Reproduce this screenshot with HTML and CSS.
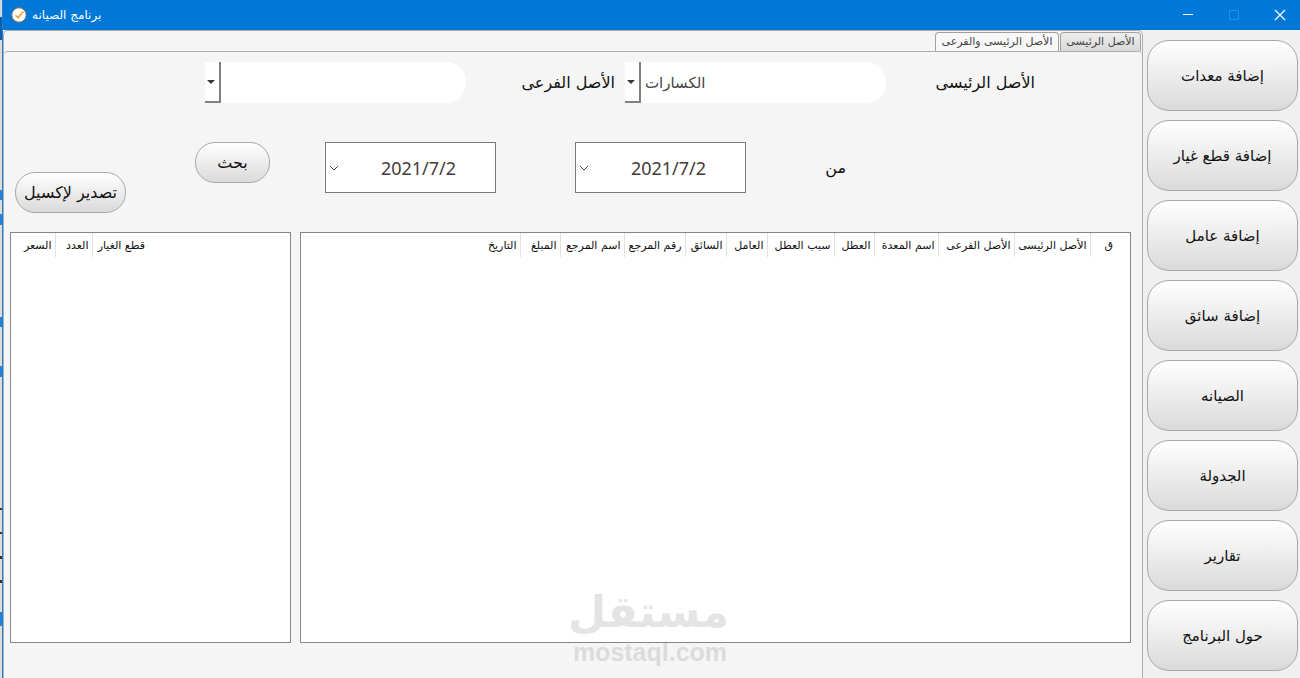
FILE: index.html
```html
<!DOCTYPE html>
<html lang="ar" dir="rtl">
<head>
	<meta charset="UTF-8">
	<meta name="viewport" content="width=device-width, initial-scale=1">
	<title>برنامج الصيانه</title>
	<link rel="stylesheet" href="styles.css">
</head>
<body>
	<div class="window">
		<header class="titlebar">
			<svg class="logo" viewBox="0 0 16 16">
				<circle cx="8" cy="8" r="7.2" fill="#fff" stroke="#85745f" stroke-width="1"/>
				<path d="M4.5 8.2 7 10.6 12.5 4.6" fill="none" stroke="#f0a030" stroke-width="1.5"/>
			</svg>
			<h1>برنامج الصيانه</h1>
			<button class="winbtn" aria-label="تصغير"><svg viewBox="0 0 12 12"><path d="M1 5.5h10" stroke="#fff"/></svg></button>
			<button class="winbtn" aria-label="تكبير" disabled><svg viewBox="0 0 12 12"><path d="M1.5 1.5h9v9h-9z" fill="none" stroke="#2b8fe2"/></svg></button>
			<button class="winbtn" aria-label="إغلاق"><svg viewBox="0 0 12 12"><path d="M1 1l10 10M11 1 1 11" stroke="#fff" stroke-width="1.2"/></svg></button>
		</header>

		<div class="content">
			<nav class="sidebar">
				<button>إضافة معدات</button>
				<button>إضافة قطع غيار</button>
				<button>إضافة عامل</button>
				<button>إضافة سائق</button>
				<button>الصيانه</button>
				<button>الجدولة</button>
				<button>تقارير</button>
				<button>حول البرنامج</button>
			</nav>

			<main class="panel">
				<div class="tabs">
					<button class="active">الأصل الرئيسى</button>
					<button>الأصل الرئيسى والفرعى</button>
				</div>

				<div class="page">
					<div class="filters">
						<label class="first" for="mainAsset">الأصل الرئيسى</label>
						<div class="combo">
							<select id="mainAsset"><option>الكسارات</option></select>
							<span class="arrow"><svg viewBox="0 0 8 4"><path d="M0 0h8L4 4z" fill="#3f3438"/></svg></span>
						</div>
						<label class="second" for="subAsset">الأصل الفرعى</label>
						<div class="combo">
							<select id="subAsset"><option></option></select>
							<span class="arrow"><svg viewBox="0 0 8 4"><path d="M0 0h8L4 4z" fill="#3f3438"/></svg></span>
						</div>
					</div>

					<div class="dates">
						<label for="dateFrom">من</label>
						<div class="date">
							<input type="text" id="dateFrom" value="2021/7/2">
							<svg viewBox="0 0 10 6"><path d="M1 1l4 4 4-4" fill="none" stroke="#444"/></svg>
						</div>
						<div class="date">
							<input type="text" id="dateTo" value="2021/7/2" aria-label="إلى">
							<svg viewBox="0 0 10 6"><path d="M1 1l4 4 4-4" fill="none" stroke="#444"/></svg>
						</div>
						<button class="pill search">بحث</button>
						<button class="pill export">تصدير لإكسيل</button>
					</div>

					<div class="lists">
						<div class="list main-list">
							<table>
								<thead>
									<tr>
										<th class="w40 center">ق</th>
										<th class="w76">الأصل الرئيسى</th>
										<th class="w76">الأصل الفرعى</th>
										<th class="w64">اسم المعدة</th>
										<th class="w40">العطل</th>
										<th class="w67">سبب العطل</th>
										<th class="w41">العامل</th>
										<th class="w41">السائق</th>
										<th class="w61">رقم المرجع</th>
										<th class="w64">اسم المرجع</th>
										<th class="w40">المبلغ</th>
										<th>التاريخ</th>
									</tr>
								</thead>
							</table>
						</div>
						<div class="list parts-list">
							<table>
								<thead>
									<tr>
										<th class="w198 parts">قطع الغيار</th>
										<th class="w37">العدد</th>
										<th>السعر</th>
									</tr>
								</thead>
							</table>
						</div>
					</div>
				</div>
			</main>
		</div>
	</div>
	<div class="edge"></div>

	<div class="watermark">
		<b>مستقل</b>
		<span>mostaql.com</span>
	</div>
</body>
</html>
```
FILE: styles.css
```css
* {
	box-sizing: border-box;
}
body {
	margin: 0;
	display: flex;
	height: 100vh;
	overflow: hidden;
	background: #f5f5f5;
	color: #111;
	font-family: "DejaVu Sans", sans-serif;
	font-size: 15px;
}
button, select, input {
	font-family: inherit;
	font-size: inherit;
	color: inherit;
	margin: 0;
}
svg {
	display: block;
}

/* strip of the desktop behind the window */
.edge {
	width: 2px;
	background: linear-gradient(#d8d8d8 0 17px, #0b5fae 17px 40px, #dcdcdc 40px 190px, #1e82d8 190px 200px, #dcdcdc 200px 214px, #1e82d8 214px 225px, #dcdcdc 225px 317px, #1e82d8 317px 327px, #dcdcdc 327px 366px, #1e82d8 366px 377px, #dcdcdc 377px 508px, #333 508px 510px, #dcdcdc 510px 532px, #333 532px 534px, #dcdcdc 534px 556px, #333 556px 559px, #dcdcdc 559px 580px, #333 580px 583px, #dcdcdc 583px 612px, #1e82d8 612px 626px, #dcdcdc 626px);
}
.window {
	flex: 1;
	min-width: 0;
	display: flex;
	flex-direction: column;
	border-left: 1px solid #1e82d8;
}

.titlebar {
	direction: ltr;
	display: flex;
	align-items: center;
	height: 30px;
	flex: none;
	padding-left: 8px;
	background: #0078d7;
	color: #fff;
}
.logo {
	width: 16px;
	height: 16px;
}
.titlebar h1 {
	flex: 1;
	margin: 0 0 0 5px;
	font-size: 12px;
	font-weight: normal;
}
.winbtn {
	width: 46px;
	height: 30px;
	padding: 0 14px 0 20px;
	border: 0;
	background: none;
}
.winbtn svg {
	width: 12px;
	height: 12px;
}

.content {
	flex: 1;
	min-height: 0;
	display: flex;
}
.sidebar {
	width: 157px;
	flex: none;
	display: flex;
	flex-direction: column;
	gap: 9px;
	padding: 10px 2px 7px 4px;
	background: #f0f0f0;
}
.sidebar button {
	flex: 1;
	max-height: 71px;
	border-radius: 22px;
}
.sidebar button, .pill {
	border: 1px solid #a8a8a8;
	background: linear-gradient(#fff, #dadada);
}

.panel {
	flex: 1;
	min-width: 0;
	display: flex;
	flex-direction: column;
	border: 1px solid #adadad;
	border-bottom: 0;
	border-radius: 5px 5px 0 0;
}
.tabs {
	display: flex;
	align-items: flex-end;
	gap: 1px;
	height: 20px;
	padding-right: 1px;
}
.tabs button {
	height: 19px;
	width: 124px;
	padding: 0;
	border: 1px solid #a0a0a0;
	border-bottom: 0;
	border-radius: 4px 4px 0 0;
	background: #f8f8f8;
	color: #444;
	font-size: 11px;
	line-height: 18px;
	white-space: nowrap;
}
.tabs .active {
	width: 81px;
	background: linear-gradient(#eee, #d8d8d8);
}
.page {
	flex: 1;
	display: flex;
	flex-direction: column;
	padding: 10px 11px 35px 6px;
	border-top: 1px solid #adadad;
	border-radius: 4px 4px 0 0;
}

.filters, .dates {
	display: flex;
	flex: none;
}
.filters {
	align-items: center;
	height: 41px;
	font-size: 16px;
}
.filters .first {
	margin-right: 96px;
	width: 149px;
}
.filters .second {
	width: 159px;
	padding-right: 10px;
}
.combo {
	position: relative;
	width: 261px;
	height: 41px;
}
.combo select {
	appearance: none;
	direction: ltr;
	width: 100%;
	height: 100%;
	padding: 0 0 0 20px;
	border: 0;
	border-radius: 0 20px 20px 0;
	background: #fff;
	color: #444;
	font-size: 15px;
}
.combo .arrow {
	position: absolute;
	left: 0;
	top: 0;
	width: 16px;
	height: 41px;
	padding: 18px 4px;
	border-right: 2px solid #808080;
	border-bottom: 2px solid #808080;
	pointer-events: none;
}
.arrow svg {
	width: 8px;
	height: 4px;
}

.dates {
	align-items: flex-start;
	height: 129px;
	padding-top: 39px;
}
.dates label {
	width: 100px;
	margin-right: 285px;
	line-height: 51px;
	font-size: 16px;
}
.date {
	position: relative;
	width: 171px;
	height: 51px;
	margin-left: 79px;
}
.date + .date {
	margin-left: 55px;
}
.date input {
	direction: ltr;
	width: 100%;
	height: 100%;
	padding: 0 0 0 16px;
	border: 1px solid #7a7a7a;
	background: #fff;
	color: #453a3c;
	text-align: center;
	font-family: "Noto Sans", sans-serif;
	font-size: 18px;
}
.date svg {
	position: absolute;
	left: 4px;
	top: 23px;
	width: 10px;
	height: 6px;
}
.pill {
	height: 41px;
	padding: 0;
	border-radius: 20px;
	font-size: 16px;
	white-space: nowrap;
}
.search {
	width: 75px;
}
.export {
	width: 111px;
	margin: 30px 69px 0 0;
}

.lists {
	flex: 1;
	min-height: 0;
	display: flex;
	gap: 9px;
}
.list {
	border: 1px solid #828790;
	background: #fff;
	overflow: hidden;
}
.main-list {
	flex: 1;
}
.parts-list {
	width: 281px;
}
.list table {
	width: 100%;
	table-layout: fixed;
	border-collapse: collapse;
}
.list th {
	height: 24px;
	padding: 0 3px 0 0;
	border-left: 1px solid #e2e2e2;
	font-size: 11px;
	font-weight: normal;
	text-align: right;
	white-space: nowrap;
}
.list th:last-child {
	border-left: 0;
}
.list .center {
	text-align: center;
}
.list .parts {
	padding-right: 145px;
}
.w37 { width: 37px; }
.w40 { width: 40px; }
.w41 { width: 41px; }
.w61 { width: 61px; }
.w64 { width: 64px; }
.w67 { width: 67px; }
.w76 { width: 76px; }
.w198 { width: 198px; }

.watermark {
	position: absolute;
	left: 50%;
	bottom: 14px;
	width: 158px;
	margin-left: -79px;
	text-align: center;
	color: #000;
	opacity: 0.1;
	pointer-events: none;
}
.watermark b {
	display: block;
	font-size: 44px;
	line-height: 56px;
}
.watermark span {
	display: block;
	direction: ltr;
	font: bold 25px/24px "Liberation Sans", sans-serif;
}
```
